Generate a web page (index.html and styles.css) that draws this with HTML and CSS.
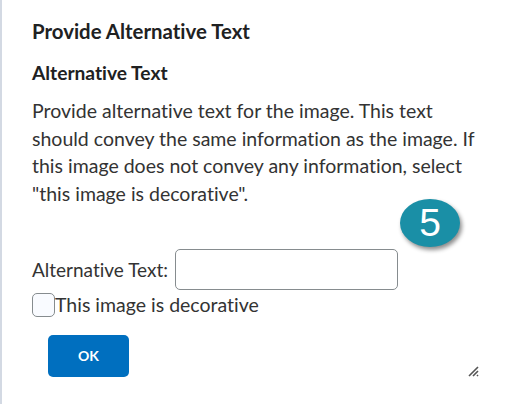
FILE: index.html
```html
<!DOCTYPE html>
<html lang="en">
<head>
    <meta charset="UTF-8">
    <title>Provide Alternative Text</title>
    <link rel="stylesheet" href="styles.css">
</head>
<body>
    <div class="dialog">
        <h1>Provide Alternative Text</h1>
        <h2>Alternative Text</h2>
        <p class="help">Provide alternative text for the image. This text should convey the same information as the image. If this image does not convey any information, select "this image is decorative".</p>

        <div class="field">
            <label for="alt">Alternative Text:</label>
            <input type="text" id="alt">
            <div class="step-badge">5</div>
        </div>
        <div class="check-row">
            <input type="checkbox" id="decorative">
            <label for="decorative">This image is decorative</label>
        </div>

        <div class="footer">
            <button class="button">OK</button>
            <svg class="grip" width="14" height="14" viewBox="0 0 14 14">
                <path d="M3 13 L12 4 M7 13 L12 8 M11 13 L12 12" stroke="#555" stroke-width="1.6" fill="none"/>
            </svg>
        </div>
    </div>
</body>
</html>
```

FILE: styles.css
```css
body {
    margin: 0;
    background: #ffffff;
    font-family: Lato, "Open Sans", sans-serif;
    font-variant-ligatures: none;
    color: #202122;
}
.dialog {
    height: 404px;
    box-sizing: border-box;
    border-left: 2px solid #d3d9e3;
    padding: 19px 25px 0 30px;
}
h1 {
    margin: 0;
    font-size: 20.4px;
    font-weight: bold;
    line-height: 24px;
}
h2 {
    margin: 18px 0 0;
    font-size: 19.2px;
    font-weight: bold;
    line-height: 24px;
}
.help {
    margin: 12px 0 0;
    font-size: 19.5px;
    line-height: 27.7px;
    color: #333;
}
.field {
    position: relative;
    display: flex;
    align-items: center;
    gap: 7px;
    margin-top: 41px;
    font-size: 19px;
    color: #333;
}
.field input {
    width: 223px;
    height: 41px;
    box-sizing: border-box;
    border: 1px solid #868c8f;
    border-radius: 5px;
    font-size: 16px;
    padding: 0 8px;
}
.step-badge {
    position: absolute;
    left: 368px;
    top: -50px;
    width: 60px;
    height: 48px;
    border-radius: 50%;
    background: #1a8fa6;
    color: #fff;
    font-family: "Liberation Sans", Arial, sans-serif;
    font-size: 39px;
    line-height: 48px;
    text-align: center;
    box-shadow: 2px 3px 4px rgba(0, 0, 0, 0.45);
}
.check-row {
    display: flex;
    align-items: center;
    margin-top: 3px;
    font-size: 19.5px;
    color: #333;
}
.check-row input {
    appearance: none;
    margin: 0;
    width: 23px;
    height: 24px;
    box-sizing: border-box;
    border: 1px solid #868c8f;
    border-radius: 5px;
    background: #f9fbff;
}
.footer {
    display: flex;
    align-items: flex-end;
    justify-content: space-between;
    margin-top: 18px;
    padding-left: 16px;
}
.button {
    width: 81px;
    height: 42px;
    border: none;
    border-radius: 5px;
    background: #006fbf;
    color: #fff;
    font-family: Lato, sans-serif;
    font-size: 14px;
    font-weight: bold;
}
.grip {
    margin-bottom: 0;
}
```
